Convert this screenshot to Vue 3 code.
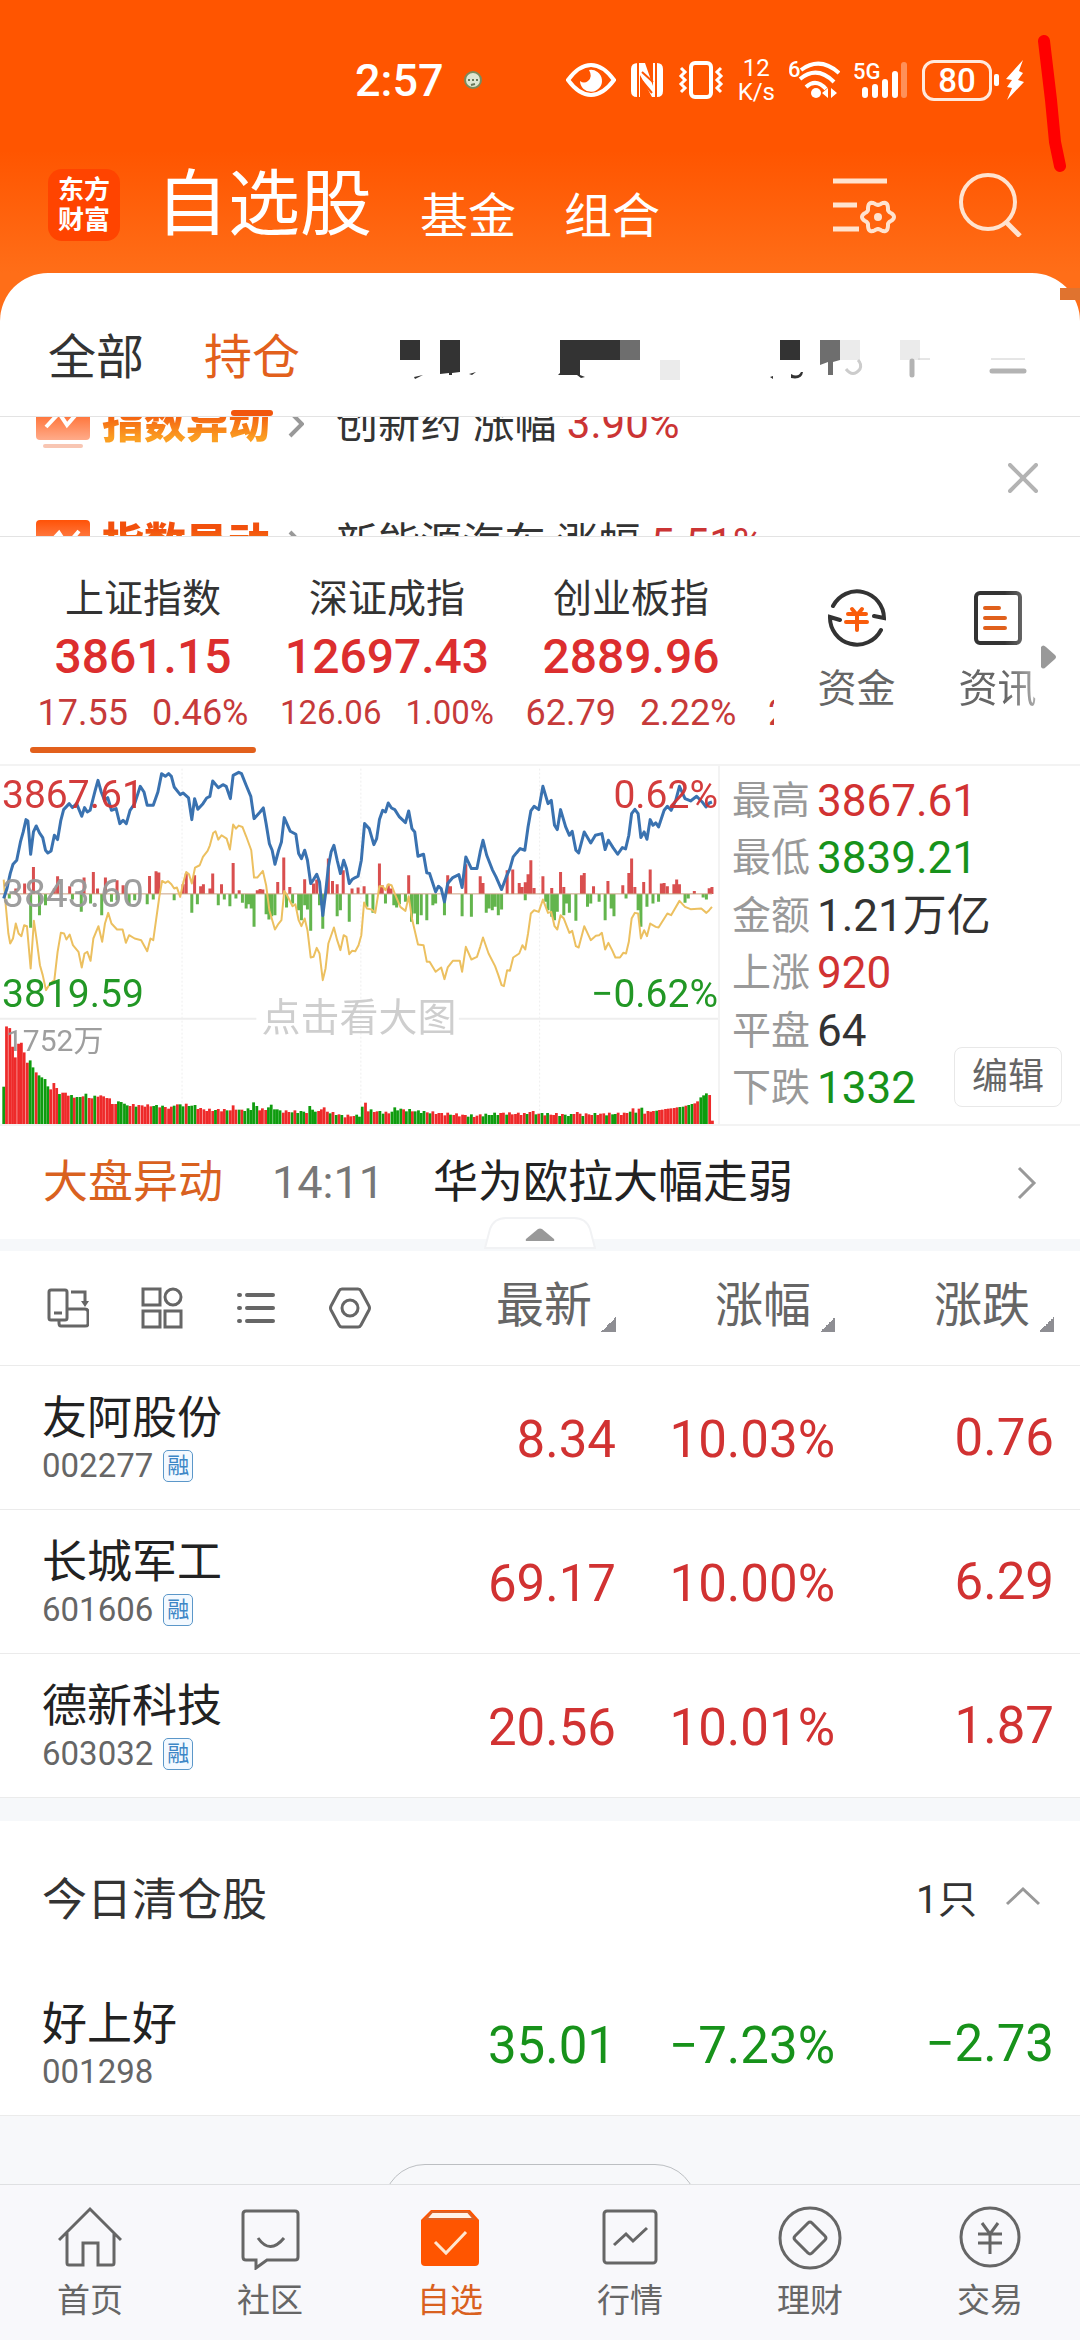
<template>
  <div class="page">
    <header class="header">
      <div class="status">
        <span class="time">2:57</span>
        <svg class="dot" viewBox="0 0 18 18" width="18" height="18">
          <circle cx="9" cy="9" r="8" fill="#dfe6d2" stroke="#7c8a5c" stroke-width="2" />
          <path d="M4 9h2M8 9h2M12 9h2M7 14l4-1" stroke="#68785a" stroke-width="2" />
        </svg>
        <div class="status-icons">
          <svg viewBox="0 0 50 36" width="50" height="36">
            <path d="M2 18Q13 3 25 3T48 18Q37 33 25 33T2 18Z" fill="none" stroke="#fff" stroke-width="4" />
            <path d="M14 19a11 11 0 1 0 9-11q4 7-1 11-4 3-8 0z" fill="#fff" />
          </svg>
          <svg viewBox="0 0 34 36" width="34" height="36">
            <path d="M8 1h7l8 23V1h4q6 0 6 6v22q0 6-6 6h-5L10 13v22H7q-6 0-6-6V7q0-6 7-6z" fill="#fff" />
            <path d="M8 1v34M26 1v34" stroke="#ff5500" stroke-width="2" />
            <path d="M12 10l11 10M12 19l10 12" stroke="#ff5500" stroke-width="2" />
          </svg>
          <svg viewBox="0 0 46 38" width="46" height="38" fill="none" stroke="#fff">
            <rect x="13" y="2" width="20" height="34" rx="4" stroke-width="4" />
            <path d="M3 7l4 4-4 4 4 4-4 4 4 4-4 4M43 7l-4 4 4 4-4 4 4 4-4 4 4 4" stroke-width="3" />
          </svg>
          <span class="speed">12<br>K/s</span>
          <svg viewBox="0 0 51 40" width="51" height="40" fill="none" stroke="#fff">
            <text x="-1" y="17" class="tiny">6</text>
            <path d="M12 10q19-14 38 3M11 19q17-14 34 3M17 27q10-9 20 2" stroke-width="4" />
            <circle cx="27" cy="33" r="5" fill="#fff" stroke="none" />
            <path d="M39 28v10l-6-5zM42 28v10l6-5z" fill="#fff" stroke="none" />
          </svg>
          <svg viewBox="0 0 54 40" width="54" height="40" stroke="#fff" stroke-width="6" stroke-linecap="round">
            <text x="-1" y="19" class="tiny" stroke="none">5G</text>
            <path d="M11 30v5M21 27v8M31 22v13M41 14v21" />
            <path d="M50 5v30" opacity=".35" />
          </svg>
          <div class="power">
            <span class="battery">80</span>
            <svg viewBox="0 0 34 42" width="34" height="42" fill="#fff">
              <rect x="2" y="15" width="5" height="12" rx="2" />
              <path d="M31 1L14 20l6 1-5 7 5 1-5 12 17-18-6-2 5-7-4-2z" />
            </svg>
          </div>
        </div>
      </div>

      <div class="topbar">
        <a href="#" class="logo">东方<br>财富</a>
        <div class="titles">
          <h1>自选股</h1>
          <button>基金</button>
          <button>组合</button>
        </div>
        <div class="actions">
          <button aria-label="管理">
            <svg viewBox="0 0 64 64" width="64" height="64" fill="none" stroke="#ffe3cf" stroke-width="5">
              <path d="M0 8h54M0 32h24M0 56h26" />
              <path :d="gear" stroke-width="4" stroke-linejoin="round" />
              <circle cx="45" cy="44" r="4" fill="#ffe3cf" stroke="none" />
            </svg>
          </button>
          <button aria-label="搜索">
            <svg viewBox="0 0 64 64" width="64" height="64" fill="none" stroke="#ffe3cf" stroke-width="4">
              <circle cx="29" cy="29" r="27" />
              <path d="M47 49l14 14" stroke-width="5" />
            </svg>
          </button>
        </div>
      </div>
    </header>

    <main class="panel">
      <div class="corner"></div>
      <nav class="tabs">
        <button>全部</button>
        <button class="active">持仓</button>
        <!-- group names stay masked -->
        <svg class="masked" viewBox="0 0 640 48" width="640" height="48" aria-hidden="true">
          <g fill="#333">
            <path d="M10 8h20v20H10zM50 8h20v32l-8 1v2h-3v-2l-9 1zM170 8h60v20h-40v15l5 2-4 1-4-3h-19l2-2zM390 8h20v20h-20z" />
            <path d="M24 45l9-2-8 4zM79 42l7-2-4 3zM380 45l3-1v3zM401 42q7 4 10-2l2 0q-1 8-12 6z" />
          </g>
          <path d="M230 8h20v20h-20zM430 8h20v20l-7 2v13h-5V30l-8 3z" fill="#6e6e6e" />
          <path d="M450 8h20v20h-20zM510 8h20v20h-20zM270 28h20v20h-20z" fill="#ebebeb" />
          <path d="M456 37q7 9 14 0 2-5-2-9" fill="none" stroke="#ccc" stroke-width="3" />
          <path d="M522 29v14M602 39h32" stroke="#b3b3b3" stroke-width="5" stroke-linecap="round" />
          <path d="M601 27h34M528 27h12" stroke="#ccc" />
        </svg>
      </nav>

      <section class="ticker">
        <div class="ticker-list">
          <a v-for="item in tickers" :key="item.name" href="#" class="ticker-row">
            <svg viewBox="0 0 54 48" width="54" height="48">
              <defs>
                <linearGradient id="tag" x1="0" y1="0" x2="0" y2="1">
                  <stop offset="0" stop-color="#ff5207" />
                  <stop offset="1" stop-color="#ffab8a" />
                </linearGradient>
              </defs>
              <rect width="54" height="40" rx="4" fill="url(#tag)" />
              <rect x="7" y="44" width="40" height="4" rx="2" fill="#f8c6b3" />
              <path d="M10 27l13-14 8 12 12-14" fill="none" stroke="#fff" stroke-width="4" />
            </svg>
            <strong>指数异动</strong>
            <svg class="chevron" viewBox="0 0 16 28" width="16" height="28">
              <path d="M2 2l12 12L2 26" fill="none" stroke="#999" stroke-width="4" />
            </svg>
            <span>{{ item.name }} 涨幅 <em>{{ item.rate }}</em></span>
          </a>
        </div>
        <button class="close" aria-label="关闭">
          <svg viewBox="0 0 30 30" width="30" height="30">
            <path d="M2 2l26 26M28 2L2 28" stroke="#b3b3b3" stroke-width="4" stroke-linecap="round" />
          </svg>
        </button>
      </section>

      <section class="indices">
        <div class="index-list">
          <button v-for="item in indices" :key="item.name" class="index" :class="{ active: item.active, long: item.long, cut: !item.value }">
            <span class="index-name">{{ item.name }}</span>
            <span class="index-value">{{ item.value }}</span>
            <span class="index-change"><i>{{ item.change }}</i><i>{{ item.rate }}</i></span>
          </button>
        </div>
        <div class="tools">
          <button>
            <svg viewBox="0 0 60 60" width="60" height="60" fill="none" stroke="#333" stroke-width="4" stroke-linecap="round">
              <path d="M6 18A27 27 0 0 1 57 30l-10-2M54 42A27 27 0 0 1 3 29l10 3" />
              <path d="M25 21l5 6 5-6M21 26h18M19 34h21M30 27v15" stroke="#f95c0b" />
            </svg>
            资金
          </button>
          <button class="fade">
            <svg viewBox="0 0 60 60" width="60" height="60" fill="none" stroke="#333" stroke-width="4" stroke-linecap="round">
              <rect x="8" y="5" width="44" height="50" rx="4" />
              <path d="M17 20h14M17 30h20M17 40h20" stroke="#e0601c" />
            </svg>
            资讯
          </button>
          <svg class="more" viewBox="0 0 15 24" width="15" height="24">
            <path d="M0 2q2-3 5 0l9 8q2 2 0 4l-9 8q-3 3-5 0z" fill="#999" />
          </svg>
        </div>
      </section>

      <section class="market">
        <div class="chart">
          <svg viewBox="0 17 1546 1075" preserveAspectRatio="none">
            <path d="M392 25V1092M777 25V1092M1162 25V1092" class="grid" />
            <path d="M0 776H552M988 776H1546" class="rule" />
            <path :d="bars(ups)" class="up" />
            <path :d="bars(downs)" class="down" />
            <path d="M0 401H1533" class="zero" />
            <polyline :points="average" class="line yellow" />
            <polyline :points="price" class="line blue" />
            <rect
              v-for="bar in volumes"
              :key="bar.x"
              :x="bar.x"
              :y="bar.y"
              width="6"
              :height="1092 - bar.y"
              :fill="bar.color"
            />
          </svg>
          <span class="mark top red">3867.61</span>
          <span class="mark top right red">0.62%</span>
          <span class="mark middle">3843.60</span>
          <span class="mark low green">3819.59</span>
          <span class="mark low right green">−0.62%</span>
          <span class="mark volume">1752万</span>
          <span class="mark hint">点击看大图</span>
        </div>
        <div class="stats">
          <dl>
            <div v-for="item in stats" :key="item.label">
              <dt>{{ item.label }}</dt>
              <dd :class="item.tone">{{ item.value }}</dd>
            </div>
          </dl>
          <button class="edit">编辑</button>
        </div>
      </section>

      <a href="#" class="alert">
        <b>大盘异动</b>
        <time>14:11</time>
        <span>华为欧拉大幅走弱</span>
        <svg viewBox="0 0 20 34" width="20" height="34">
          <path d="M2 2l15 15L2 32" fill="none" stroke="#999" stroke-width="3" />
        </svg>
      </a>

      <div class="divider">
        <button class="handle" aria-label="收起">
          <svg viewBox="0 0 112 32" width="112" height="32">
            <path d="M1 31L6 12Q10 1 22 1H90Q102 1 106 12L111 31Z" fill="#fff" stroke="#f1f2f4" stroke-width="2" />
            <path d="M42 22L54 12q2-1 4 0L70 22q1 2-1 2H43q-2 0-1-2z" fill="#999" />
          </svg>
        </button>
      </div>

      <table class="stocks">
        <thead>
          <tr>
            <th>
              <div class="views">
                <button aria-label="切换横屏">
                  <svg viewBox="0 0 42 42">
                    <rect x="2" y="3" width="18" height="30" rx="2" />
                    <path d="M7 26h8M21 22h17q3 0 3 3v12q0 2-3 2H14q-2 0-2-3v-3M24 5h14v11" />
                    <path d="M34 14h8l-4 6z" fill="#666" stroke="none" />
                  </svg>
                </button>
                <button aria-label="宫格">
                  <svg viewBox="0 0 42 42">
                    <path d="M2 2h17v16H2zM2 24h17v16H2zM24 24h16v16H24z" />
                    <circle cx="32" cy="10" r="8" />
                  </svg>
                </button>
                <button aria-label="列表">
                  <svg viewBox="0 0 42 42" stroke-linecap="round">
                    <path d="M12 8h26M12 21h26M12 34h26M4 8h1M4 21h1M4 34h1" stroke-width="4" />
                  </svg>
                </button>
                <button aria-label="设置">
                  <svg viewBox="0 0 42 42">
                    <path d="M13 2h16q2 0 3 2l8 15q1 2 0 4l-8 15q-1 2-3 2H13q-2 0-3-2L2 23q-1-2 0-4l8-15q1-2 3-2z" />
                    <circle cx="21" cy="21" r="8" />
                  </svg>
                </button>
              </div>
            </th>
            <th v-for="col in columns" :key="col">
              <button class="sort">{{ col }}</button>
            </th>
          </tr>
        </thead>
        <tbody>
          <tr v-for="row in holdings" :key="row.code">
            <td>
              <div class="name">{{ row.name }}</div>
              <div class="code">{{ row.code }}<span class="badge">融</span></div>
            </td>
            <td class="red">{{ row.price }}</td>
            <td class="red">{{ row.rate }}</td>
            <td class="red">{{ row.change }}</td>
          </tr>
        </tbody>
      </table>

      <section class="closed">
        <div class="closed-head">
          <h2>今日清仓股</h2>
          <button>
            1只
            <svg viewBox="0 0 36 20" width="36" height="20">
              <path d="M2 18L18 3l16 15" fill="none" stroke="#999" stroke-width="3" />
            </svg>
          </button>
        </div>
        <table class="stocks">
          <tbody>
            <tr>
              <td>
                <div class="name">好上好</div>
                <div class="code">001298</div>
              </td>
              <td class="green">35.01</td>
              <td class="green">−7.23%</td>
              <td class="green">−2.73</td>
            </tr>
          </tbody>
        </table>
      </section>

      <div class="tail"><div class="pill"></div></div>
    </main>

    <nav class="bottom">
      <a href="#">
        <svg viewBox="0 0 64 64">
          <path d="M1 34L32 3l31 31M9 27v30q0 2 2 2h14V37h15v22h14q2 0 2-2V27" />
        </svg>
        首页
      </a>
      <a href="#">
        <svg viewBox="0 0 64 64">
          <path d="M8 5h49q3 0 3 3v43q0 3-3 3H29l-11 8v-8H8q-3 0-3-3V8q0-3 3-3zM20 32q12 17 26 0" />
        </svg>
        社区
      </a>
      <a href="#" class="active">
        <svg viewBox="0 0 64 64">
          <path d="M13 4h39l9 10v42q0 4-4 4H7q-4 0-4-4V14z" fill="#ff5500" stroke="none" />
          <path d="M14 6h36l6 7H8z" fill="#fff3e8" stroke="#dd6227" stroke-width="2" />
          <path d="M17 36l11 11 20-21" stroke="#ffe6cf" />
        </svg>
        自选
      </a>
      <a href="#">
        <svg viewBox="0 0 64 64">
          <rect x="6" y="5" width="52" height="52" rx="3" />
          <path d="M16 39l12-11 7 7 14-13" />
        </svg>
        行情
      </a>
      <a href="#">
        <svg viewBox="0 0 64 64">
          <circle cx="32" cy="32" r="30" />
          <path d="M30 17q2-2 4 0l13 13q2 2 0 4L34 47q-2 2-4 0L17 34q-2-2 0-4z" />
        </svg>
        理财
      </a>
      <a href="#">
        <svg viewBox="0 0 64 64">
          <circle cx="32" cy="31" r="29" />
          <path d="M24 17l8 11 8-11M20 28h24M20 37h24M32 28v20" />
        </svg>
        交易
      </a>
    </nav>

    <svg class="scribble" viewBox="0 0 30 150" width="30" height="150" aria-hidden="true">
      <path d="M8 11L15 70L19 112L24 136" />
    </svg>
  </div>
</template>

<script setup>
const tickers = [
  { name: '创新药', rate: '3.90%' },
  { name: '新能源汽车', rate: '5.51%' }
]

const indices = [
  { name: '上证指数', value: '3861.15', change: '17.55', rate: '0.46%', active: true },
  { name: '深证成指', value: '12697.43', change: '126.06', rate: '1.00%', long: true },
  { name: '创业板指', value: '2889.96', change: '62.79', rate: '2.22%' },
  { name: '', value: '', change: '2', rate: '' }
]

const stats = [
  { label: '最高', value: '3867.61', tone: 'red' },
  { label: '最低', value: '3839.21', tone: 'green' },
  { label: '金额', value: '1.21万亿', tone: '' },
  { label: '上涨', value: '920', tone: 'red' },
  { label: '平盘', value: '64', tone: '' },
  { label: '下跌', value: '1332', tone: 'green' }
]

const columns = ['最新', '涨幅', '涨跌']

const holdings = [
  { name: '友阿股份', code: '002277', price: '8.34', rate: '10.03%', change: '0.76' },
  { name: '长城军工', code: '601606', price: '69.17', rate: '10.00%', change: '6.29' },
  { name: '德新科技', code: '603032', price: '20.56', rate: '10.01%', change: '1.87' }
]

// six-lobed gear outline around (45, 44)
const gear = Array.from({ length: 72 }, (_, i) => {
  const a = (i * 5 * Math.PI) / 180
  const r = 14 + 2 * Math.cos(6 * a)
  return `${i ? 'L' : 'M'}${(45 + r * Math.cos(a)).toFixed(1)} ${(44 + r * Math.sin(a)).toFixed(1)}`
}).join('') + 'Z'

const price = '8,415 15,385 22,340 28,312 36,300 44,245 50,215 56,178 60,182 66,282 72,215 78,197 85,218 92,232 98,270 103,278 110,272 117,225 124,238 131,180 137,148 149,130 156,142 165,130 176,168 182,142 188,155 194,150 205,90 211,60 218,95 225,120 232,112 240,150 250,145 258,190 265,180 272,190 280,150 290,130 302,78 310,95 317,135 330,135 340,95 348,40 356,48 363,40 369,48 375,80 388,103 394,98 406,113 413,178 419,115 426,147 437,130 445,113 452,108 458,62 470,82 480,73 487,78 496,115 502,45 514,36 520,40 530,75 540,108 547,175 560,155 567,143 573,190 580,250 586,270 592,312 600,270 606,245 612,172 625,213 637,222 643,280 649,295 656,270 662,300 669,370 675,358 682,342 688,365 695,466 701,400 707,320 713,275 719,255 726,300 733,340 740,300 746,325 752,370 758,358 765,352 771,348 778,300 785,190 795,205 805,253 811,235 817,178 824,150 830,155 836,128 843,143 850,148 860,170 873,187 880,152 887,205 893,215 900,288 912,282 919,338 925,340 938,395 944,378 950,385 957,425 964,370 975,352 988,343 995,382 1003,290 1015,325 1027,325 1034,275 1040,240 1048,285 1060,328 1068,350 1080,388 1090,350 1098,325 1105,290 1112,278 1120,265 1130,270 1137,200 1143,152 1150,138 1160,148 1169,78 1180,130 1187,120 1194,195 1200,208 1207,148 1218,200 1226,225 1232,213 1240,270 1246,278 1258,215 1272,248 1282,225 1296,220 1303,268 1310,240 1320,262 1330,282 1340,262 1347,266 1354,225 1360,160 1367,147 1374,160 1380,232 1387,215 1393,237 1400,178 1406,195 1412,188 1418,200 1430,150 1437,138 1445,150 1455,120 1463,78 1475,115 1487,122 1500,108 1512,125 1520,140 1527,128 1533,125'

const average = '8,358 12,430 18,520 22,550 28,535 34,490 40,520 46,528 52,495 58,498 66,625 73,482 79,540 86,615 92,645 99,690 108,670 117,660 124,575 131,518 138,520 143,538 150,523 157,555 169,575 176,622 182,580 188,575 195,602 201,535 212,498 220,545 226,490 233,458 240,490 252,508 264,508 271,548 278,525 290,535 304,540 317,573 324,535 330,540 336,480 343,410 349,362 356,368 362,363 369,372 375,385 381,382 388,410 394,370 401,335 407,342 413,370 420,322 430,315 437,290 447,272 452,255 459,218 464,213 470,238 477,225 488,235 495,268 502,193 508,205 514,196 522,200 530,228 541,270 547,352 554,352 566,332 573,375 580,450 592,508 600,490 606,480 612,392 618,405 630,438 636,432 643,480 649,498 656,475 662,510 669,592 675,590 682,563 688,580 695,660 701,625 707,550 719,502 726,540 733,570 740,525 746,530 752,582 758,572 765,573 772,555 778,525 784,427 790,445 800,448 808,458 817,378 824,378 830,390 836,372 843,375 850,400 862,440 873,452 880,408 887,475 900,553 912,555 919,605 925,605 938,635 950,622 957,657 964,622 975,602 990,602 995,635 1003,560 1015,598 1027,590 1034,560 1040,532 1052,580 1066,618 1073,645 1080,675 1085,678 1092,630 1098,632 1105,592 1118,580 1125,555 1131,568 1137,520 1143,460 1150,450 1160,455 1169,418 1180,458 1187,455 1194,498 1200,508 1207,465 1214,475 1226,518 1232,512 1240,558 1246,562 1258,498 1272,540 1283,527 1290,525 1296,518 1303,568 1310,548 1318,570 1325,592 1335,592 1342,578 1348,580 1354,545 1360,475 1367,458 1374,460 1380,535 1387,510 1393,528 1400,490 1412,500 1418,502 1437,460 1445,465 1463,422 1475,440 1487,447 1510,445 1521,458 1527,450 1533,440'

// momentum bars as [x, y] pairs, drawn from the zero line at 401
const ups = [[34, 385], [53, 370], [72, 320], [117, 385], [124, 348], [150, 378], [181, 352], [201, 335], [210, 385], [227, 352], [252, 360], [265, 375], [322, 347], [336, 333], [342, 337], [394, 372], [401, 340], [419, 345], [432, 378], [438, 372], [452, 385], [458, 340], [477, 372], [502, 308], [515, 390], [554, 390], [560, 386], [566, 388], [598, 365], [611, 292], [624, 380], [656, 357], [675, 370], [682, 358], [707, 295], [716, 362], [726, 372], [739, 330], [758, 385], [771, 382], [784, 378], [817, 310], [823, 375], [836, 372], [842, 385], [880, 345], [964, 345], [970, 378], [1003, 312], [1034, 348], [1040, 368], [1092, 330], [1104, 328], [1118, 368], [1124, 380], [1131, 366], [1137, 342], [1143, 300], [1150, 383], [1169, 348], [1188, 383], [1207, 335], [1214, 380], [1252, 345], [1258, 338], [1278, 378], [1309, 362], [1341, 375], [1354, 338], [1360, 295], [1367, 380], [1386, 365], [1400, 328], [1424, 370], [1430, 368], [1437, 378], [1451, 372], [1457, 358], [1463, 372], [1495, 392], [1527, 384], [1533, 380]]
const downs = [[20, 415], [66, 503], [85, 465], [98, 435], [156, 418], [175, 455], [195, 430], [219, 465], [240, 425], [252, 420], [278, 435], [290, 420], [317, 432], [330, 418], [375, 420], [413, 458], [425, 432], [470, 435], [483, 418], [495, 438], [508, 415], [522, 428], [530, 445], [536, 432], [541, 445], [547, 500], [573, 462], [579, 478], [585, 468], [592, 465], [617, 442], [630, 430], [643, 450], [649, 480], [656, 435], [662, 448], [669, 512], [688, 435], [695, 506], [726, 468], [733, 450], [752, 485], [790, 440], [803, 458], [830, 430], [848, 435], [854, 442], [860, 432], [873, 425], [886, 485], [893, 460], [899, 492], [907, 465], [919, 480], [932, 435], [938, 430], [957, 465], [995, 468], [1015, 470], [1047, 458], [1053, 445], [1060, 450], [1066, 440], [1073, 465], [1080, 448], [1131, 420], [1175, 425], [1180, 450], [1188, 470], [1194, 480], [1200, 455], [1214, 465], [1220, 430], [1226, 458], [1240, 482], [1265, 440], [1272, 430], [1290, 425], [1303, 480], [1316, 445], [1322, 468], [1348, 415], [1374, 450], [1380, 500], [1393, 440], [1406, 430], [1418, 425], [1475, 428], [1482, 415], [1514, 412], [1521, 418]]

const bars = (list) => list.map(([x, y]) => `M${x} 401V${y}`).join('')

// volume outline, the bars between two anchors are interpolated
const outline = [[8, 980], [15, 780], [21, 805], [27, 860], [34, 895], [40, 848], [46, 848], [53, 880], [60, 915], [66, 898], [73, 930], [85, 948], [98, 958], [105, 988], [111, 988], [117, 963], [124, 993], [131, 1008], [137, 992], [150, 1008], [175, 1014], [181, 1000], [195, 1016], [210, 1006], [233, 1012], [240, 1028], [252, 1034], [259, 1015], [265, 1034], [278, 1036], [342, 1038], [369, 1044], [375, 1034], [413, 1036], [440, 1050], [495, 1050], [502, 1040], [515, 1050], [541, 1048], [547, 1023], [554, 1046], [573, 1050], [580, 1034], [592, 1046], [605, 1054], [662, 1056], [669, 1035], [675, 1054], [688, 1056], [695, 1035], [701, 1054], [740, 1068], [778, 1066], [784, 1008], [790, 1050], [840, 1060], [848, 1046], [900, 1054], [960, 1062], [1020, 1068], [1080, 1060], [1137, 1062], [1143, 1050], [1150, 1060], [1234, 1066], [1240, 1050], [1246, 1064], [1300, 1062], [1354, 1060], [1360, 1042], [1367, 1058], [1380, 1040], [1386, 1058], [1430, 1048], [1470, 1040], [1500, 1028], [1510, 1010], [1527, 995], [1533, 1082]]
const tones = 'grrrrrrrrggrggggrrrgrrrgrggrgrrgrrrrrrrggggrrgrrrrrggrgrrrgrggrgggrrrrrrgrrrgrrrgrgggggrrrgggggrrrgrgggrgggrrrrgrgrgrrrrgggrrgrrggrrggggrggrggggrgrrrrrrgrrrrrggrrrggggggrrgrrrrrrgrrgrgrgrrrgrgggrrrgrrrgrrrgrggrrrrgrgrgrrrrgrrrrrrrggrggrrgggrr'

const volumes = Array.from(tones, (tone, i) => {
  const x = 5 + (i * 1526) / (tones.length - 1)
  const next = outline.findIndex(([ax]) => ax >= x + 3)
  const [x1, y1] = outline[Math.max(0, next - 1)]
  const [x2, y2] = outline[next < 0 ? outline.length - 1 : next]
  const t = x2 === x1 ? 0 : (x + 3 - x1) / (x2 - x1)
  const wave = i > 20 && i < 220 ? Math.round(Math.sin(i * 2.4) * 4) : 0
  return {
    x: Math.round(x),
    y: Math.round(y1 + (y2 - y1) * t) + wave,
    color: tone === 'r' ? '#ee2a2a' : '#0e9c0e'
  }
})
</script>

<style>
body {
  background: #f7f8fa;
}
</style>

<style scoped>
.page {
  position: relative;
  display: flex;
  flex-direction: column;
  min-height: 100vh;
  overflow: hidden;
  background: #ff6e18;
  color: #333;
  font-family: Roboto, "Noto Sans CJK SC", sans-serif;
}

button {
  padding: 0;
  border: none;
  background: none;
  color: inherit;
  font: inherit;
  cursor: pointer;
}

a {
  color: inherit;
  text-decoration: none;
}

svg {
  display: block;
  flex-shrink: 0;
}

.red {
  color: #d13232;
}

.green {
  color: #17921a;
}

.header {
  background: linear-gradient(#ff5500 55%, #ff6e18);
  color: #fff;
}

.status {
  display: flex;
  align-items: center;
  height: 160px;
  padding: 0 54px 0 355px;
  box-sizing: border-box;
}

.time {
  font-size: 45px;
  font-weight: 500;
}

.dot {
  margin-left: 20px;
}

.status-icons {
  display: flex;
  align-items: center;
  gap: 14px;
  margin-left: auto;
}

.speed {
  font-size: 24px;
  line-height: 24px;
  text-align: center;
}

.tiny {
  fill: #fff;
  stroke: none;
  font-size: 22px;
  font-weight: 500;
}

.power {
  display: flex;
  align-items: center;
}

.battery {
  width: 64px;
  border: 3px solid #ffe9dc;
  border-radius: 12px;
  font-size: 33px;
  font-weight: 500;
  line-height: 35px;
  text-align: center;
}

.topbar {
  display: flex;
  align-items: center;
  height: 113px;
  padding: 0 57px 24px 48px;
  box-sizing: border-box;
}

.logo {
  width: 72px;
  height: 72px;
  padding-top: 6px;
  box-sizing: border-box;
  border-radius: 14px;
  background: #ff4400;
  font-size: 26px;
  font-weight: 700;
  line-height: 30px;
  text-align: center;
}

.titles {
  display: flex;
  align-items: flex-end;
  gap: 48px;
  margin-left: 36px;
  font-size: 48px;
  line-height: 56px;
}

.titles h1 {
  margin: 0;
  font-size: 72px;
  font-weight: 400;
  line-height: 80px;
}

.actions {
  display: flex;
  gap: 62px;
  margin-left: auto;
}

.panel {
  position: relative;
  flex: 1;
  display: flex;
  flex-direction: column;
  border-radius: 48px 48px 0 0;
  background: #fff;
}

.corner {
  position: absolute;
  top: 15px;
  right: 0;
  width: 20px;
  height: 12px;
  background: #e0732f;
}

.tabs {
  display: flex;
  align-items: stretch;
  height: 144px;
  padding: 0 48px;
  box-sizing: border-box;
  border-bottom: 1px solid #e3e3e3;
  font-size: 48px;
  line-height: 56px;
}

.tabs button {
  position: relative;
  margin-right: 60px;
  padding-top: 26px;
}

.tabs .active {
  color: #e2601c;
}

.tabs .active::after {
  content: "";
  position: absolute;
  bottom: 0;
  left: 27px;
  width: 42px;
  height: 6px;
  border-radius: 3px;
  background: #f2560d;
}

.masked {
  margin: 59px 0 0 30px;
}

.ticker {
  position: relative;
  height: 119px;
  overflow: hidden;
  border-bottom: 1px solid #e3e3e3;
}

/* caught halfway between two headlines */
.ticker-list {
  margin-top: -53px;
}

.ticker-row {
  display: flex;
  align-items: center;
  height: 120px;
  padding-left: 36px;
  font-size: 42px;
  line-height: 48px;
}

.ticker-row strong {
  margin-left: 12px;
  background: linear-gradient(#f2500c 20%, #fb9f22 80%);
  background-clip: text;
  color: transparent;
  font-weight: 900;
}

.ticker-row .chevron {
  margin: 0 32px 0 18px;
}

.ticker-row em {
  color: #cb3434;
  font-style: normal;
}

.close {
  position: absolute;
  top: 46px;
  right: 42px;
}

.indices {
  display: grid;
  grid-template-columns: minmax(0, 1fr) 306px;
  height: 229px;
  border-bottom: 2px solid #f3f3f3;
  box-sizing: border-box;
}

.index-list {
  display: flex;
  padding-left: 21px;
  overflow: hidden;
}

.index {
  display: flex;
  flex-direction: column;
  align-items: center;
  flex: 0 0 226px;
  margin: 36px 9px 0;
}

.index-name {
  height: 52px;
  font-size: 39px;
  line-height: 52px;
}

.index-value {
  height: 64px;
  color: #dc2e2e;
  font-size: 48px;
  font-weight: 500;
  line-height: 64px;
}

.index-change {
  display: flex;
  gap: 24px;
  height: 48px;
  color: #c63a3a;
  font-size: 36px;
  line-height: 48px;
}

.index-change i {
  font-style: normal;
}

.long .index-change {
  font-size: 33px;
}

.cut {
  align-items: flex-start;
  padding-left: 6px;
}

.index.active::after {
  content: "";
  align-self: stretch;
  height: 6px;
  margin-top: 10px;
  border-radius: 3px;
  background: #e2601c;
}

.tools {
  position: relative;
  display: flex;
  padding: 51px 12px 0;
}

.tools button {
  display: flex;
  flex-direction: column;
  align-items: center;
  gap: 15px;
  flex: 1;
  color: #666;
  font-size: 39px;
  line-height: 52px;
}

.tools .fade {
  mask-image: linear-gradient(to right, #000 55%, rgba(0, 0, 0, 0.5) 80%);
}

.more {
  position: absolute;
  top: 108px;
  right: 24px;
}

.market {
  display: grid;
  grid-template-columns: 2fr 1fr;
  grid-template-rows: minmax(0, 1fr);
  height: 360px;
  box-sizing: border-box;
  border-bottom: 2px solid #f3f3f3;
}

.chart {
  position: relative;
  border-right: 2px solid #f3f3f3;
}

.chart > svg {
  width: 100%;
  height: 358px;
}

.chart path,
.chart polyline {
  fill: none;
  vector-effect: non-scaling-stroke;
}

.grid {
  stroke: #eee;
  stroke-dasharray: 2 2;
}

.rule {
  stroke: #eee;
  stroke-width: 2;
}

.zero {
  stroke: #c9a183;
}

.up {
  stroke: #d94f4f;
  stroke-width: 3;
}

.down {
  stroke: #63b54d;
  stroke-width: 3;
}

.line {
  stroke-linejoin: round;
}

.blue {
  stroke: #3a72b0;
  stroke-width: 3;
}

.yellow {
  stroke: #ecc060;
  stroke-width: 2;
}

.mark {
  position: absolute;
  left: 2px;
  font-size: 39px;
  line-height: 44px;
  opacity: 0.95;
}

.mark.right {
  right: 0;
  left: auto;
}

.top {
  top: 7px;
}

.middle {
  top: 106px;
  color: #999;
}

.low {
  top: 206px;
}

.volume {
  top: 253px;
  left: 6px;
  color: #999;
  font-size: 30px;
}

.hint {
  top: 230px;
  left: 50%;
  color: #ccc;
  transform: translateX(-50%);
  white-space: nowrap;
}

.stats {
  position: relative;
  padding: 6px 0 7px 12px;
}

.stats dl {
  display: grid;
  grid-template-rows: repeat(6, minmax(0, 1fr));
  height: 100%;
  margin: 0;
}

.stats dl div {
  display: flex;
  align-items: center;
  gap: 7px;
  line-height: 56px;
}

.stats dt {
  color: #999;
  font-size: 39px;
}

.stats dd {
  margin: 0;
  font-size: 44px;
}

.edit {
  position: absolute;
  right: 18px;
  bottom: 17px;
  width: 108px;
  height: 60px;
  border: 1px solid #e8e8e8;
  border-radius: 8px;
  background: #fff;
  color: #666;
  font-size: 36px;
  line-height: 56px;
}

.alert {
  display: flex;
  align-items: center;
  gap: 49px;
  height: 113px;
  padding: 0 43px;
  color: #222;
  font-size: 45px;
  line-height: 56px;
}

.alert b {
  color: #d9611f;
  font-weight: 400;
}

.alert time {
  color: #777;
}

.alert svg {
  margin-left: auto;
}

.divider {
  position: relative;
  height: 12px;
  background: #f6f8fa;
}

.handle {
  position: absolute;
  bottom: 2px;
  left: 50%;
  transform: translateX(-50%);
}

.stocks {
  width: 100%;
  border-collapse: collapse;
  table-layout: fixed;
}

.stocks th,
.stocks td {
  width: 219px;
  height: 144px;
  padding: 0;
  box-sizing: border-box;
  border-bottom: 1px solid #ebebeb;
  font-size: 51px;
  font-weight: 400;
  text-align: right;
}

.stocks th {
  height: 114px;
}

.stocks tr > :first-child {
  width: auto;
  padding-left: 42px;
  text-align: left;
}

.stocks tr > :last-child {
  width: 245px;
  padding-right: 26px;
}

.stocks td:nth-child(2),
.stocks td:nth-child(3) {
  padding-top: 4px;
}

.views {
  display: flex;
  gap: 52px;
  padding-left: 5px;
}

.views svg {
  width: 42px;
  height: 42px;
  fill: none;
  stroke: #666;
  stroke-width: 3;
}

.sort {
  display: inline-flex;
  align-items: flex-end;
  gap: 9px;
  color: #666;
  font-size: 48px;
  line-height: 56px;
  vertical-align: top;
}

.sort::after {
  content: "";
  width: 15px;
  height: 15px;
  margin-bottom: 2px;
  background: linear-gradient(135deg, transparent 50%, #8e8e93 50%);
}

.name {
  color: #222;
  font-size: 45px;
  line-height: 58px;
}

.code {
  display: flex;
  align-items: center;
  gap: 10px;
  color: #666;
  font-size: 33px;
  line-height: 36px;
}

.badge {
  width: 28px;
  border: 1px solid #5b97c9;
  border-radius: 5px;
  background: #f3f9ff;
  color: #3d86c6;
  font-size: 22px;
  line-height: 30px;
  text-align: center;
}

.closed {
  border-top: 23px solid #f6f8fa;
}

.closed-head {
  display: flex;
  align-items: center;
  justify-content: space-between;
  height: 151px;
  padding: 0 39px 0 42px;
}

.closed-head h2 {
  margin: 0;
  font-size: 45px;
  font-weight: 400;
}

.closed-head button {
  display: flex;
  align-items: center;
  gap: 28px;
  font-size: 39px;
}

.tail {
  flex: 1;
  min-height: 68px;
  overflow: hidden;
  background: #f7f8fa;
}

.pill {
  width: 314px;
  height: 84px;
  margin: 48px auto -64px;
  box-sizing: border-box;
  border: 1px solid #bcbfc2;
  border-radius: 42px;
}

.bottom {
  display: grid;
  grid-template-columns: repeat(6, 1fr);
  height: 157px;
  box-sizing: border-box;
  border-top: 1px solid #dfe0e2;
  background: #f8f8fb;
}

.bottom a {
  display: flex;
  flex-direction: column;
  align-items: center;
  gap: 11px;
  padding-top: 21px;
  color: #666;
  font-size: 33px;
  line-height: 40px;
}

.bottom .active {
  color: #d9611f;
}

.bottom svg {
  width: 64px;
  height: 64px;
  fill: none;
  stroke: #666;
  stroke-width: 3;
}

.scribble {
  position: absolute;
  top: 30px;
  right: 14px;
  fill: none;
  stroke: #f00;
  stroke-width: 12;
  stroke-linecap: round;
  stroke-linejoin: round;
}
</style>
